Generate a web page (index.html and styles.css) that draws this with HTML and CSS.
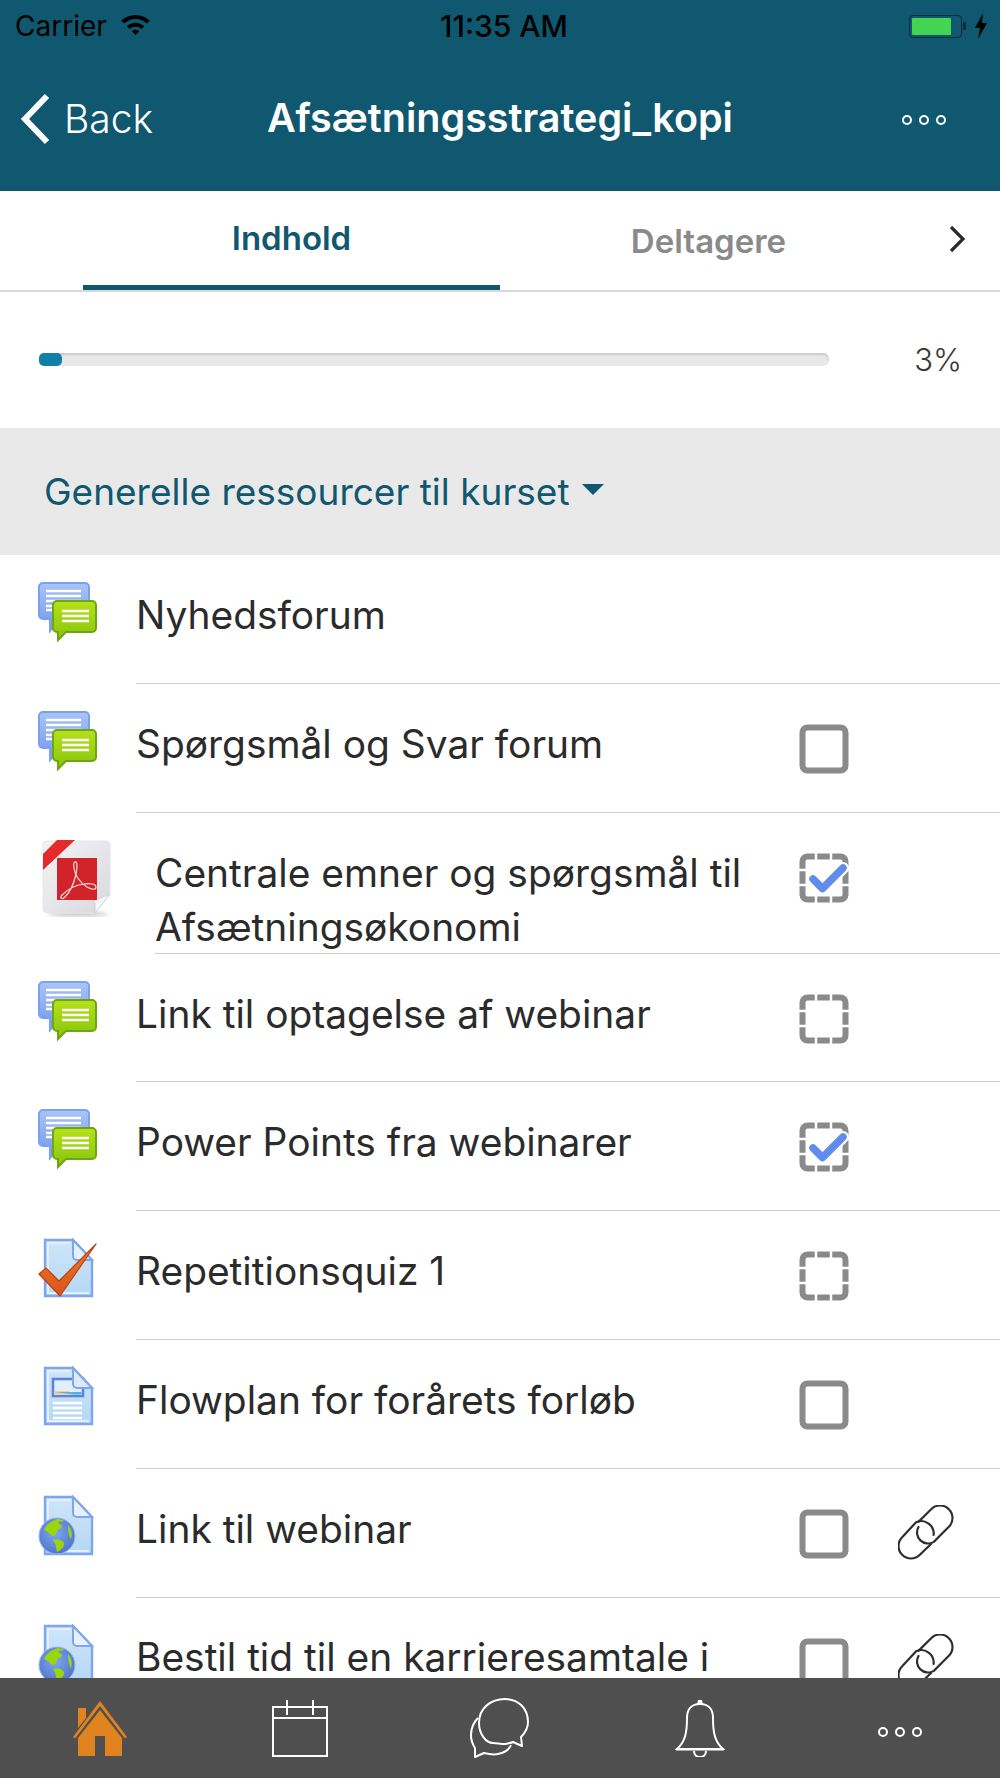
FILE: index.html
```html
<!DOCTYPE html>
<html lang="da">
<head>
<meta charset="utf-8">
<title>Afsætningsstrategi_kopi</title>
<link rel="stylesheet" href="styles.css">
</head>
<body>
<svg class="defs" width="0" height="0" aria-hidden="true">
  <defs>
    <linearGradient id="gBlue" x1="0" y1="0" x2="0" y2="1"><stop offset="0" stop-color="#a9c4f7"/><stop offset="1" stop-color="#6f97ec"/></linearGradient>
    <linearGradient id="gGreen" x1="0" y1="0" x2="0" y2="1"><stop offset="0" stop-color="#b5e21a"/><stop offset="1" stop-color="#86c40c"/></linearGradient>
    <linearGradient id="gDoc" x1="0" y1="0" x2="0" y2="1"><stop offset="0" stop-color="#cfe5f9"/><stop offset="1" stop-color="#b4d8f4"/></linearGradient>
    <linearGradient id="gPdf" x1="0" y1="0" x2="1" y2="1"><stop offset="0" stop-color="#f4f4f6"/><stop offset="1" stop-color="#d8d9de"/></linearGradient>
    <linearGradient id="gCheck" x1="0" y1="0" x2="0" y2="1"><stop offset="0" stop-color="#f07b2c"/><stop offset="1" stop-color="#d9541a"/></linearGradient>
    <radialGradient id="gGlobe" cx="0.45" cy="0.4" r="0.65"><stop offset="0" stop-color="#7ea6f0"/><stop offset="1" stop-color="#4c72c8"/></radialGradient>
    <filter id="soft"><feGaussianBlur stdDeviation="2"/></filter>

    <symbol id="i-forum" viewBox="0 0 80 80">
      <path d="M7 4h42a4 4 0 0 1 4 4v28a4 4 0 0 1-4 4H24L14 52V40H7a4 4 0 0 1-4-4V8a4 4 0 0 1 4-4z" fill="url(#gBlue)" stroke="#7c9fee" stroke-width="2"/>
      <path d="M10 12h35M10 17h35M10 22h35M10 27h24M10 31h12" stroke="#fff" stroke-width="2.4" fill="none"/>
      <path d="M21 22h35a4 4 0 0 1 4 4v23a4 4 0 0 1-4 4H30l-8 8v-8h-1a4 4 0 0 1-4-4V26a4 4 0 0 1 4-4z" fill="url(#gGreen)" stroke="#6fa512" stroke-width="2"/>
      <path d="M26 32h27M26 37h27M26 42h27" stroke="#fff" stroke-width="2.4" fill="none"/>
    </symbol>

    <symbol id="i-pdf" viewBox="0 0 80 80">
      <ellipse cx="42" cy="77" rx="30" ry="2" fill="#b9b9b9" filter="url(#soft)"/>
      <path d="M11 4h59a4 4 0 0 1 4 4v49L59 76H11a4 4 0 0 1-4-4V8a4 4 0 0 1 4-4z" fill="url(#gPdf)" stroke="#e6e6ea"/>
      <path d="M59 76V66a3 3 0 0 0-2-2l17-7z" fill="#f7f7f9" stroke="#cfd0d4"/>
      <path d="M21 3h18L7 33V17z" fill="#e32b2b"/>
      <rect x="21" y="21" width="40" height="42" fill="#d2232a"/>
      <path d="M26 58c-3 3 0 5 3 2 5-5 9-14 11-23 1-5 2-10 0-12-2-1-3 2-2 6 1 8 7 15 13 19 5 3 9 3 9 0s-6-4-12-3c-8 1-16 5-22 11z" fill="none" stroke="#f6dede" stroke-width="1.200"/>
    </symbol>

    <symbol id="i-quiz" viewBox="0 0 80 80">
      <path d="M9 5h28l19 20v36H9z" fill="url(#gDoc)" stroke="#7fa5ee" stroke-width="2.4"/>
      <path d="M12 8h23M12 8v50h41" fill="none" stroke="#e4f1fc" stroke-width="1.8"/>
      <path d="M37 5l19 20H41a4 4 0 0 1-4-4z" fill="#e5f0fb" stroke="#7fa5ee" stroke-width="2"/>
      <path d="M3 39l7-6 13 13L60 9 24 61z" fill="url(#gCheck)" stroke="#b8431a" stroke-width="1.2" stroke-linejoin="round"/>
    </symbol>

    <symbol id="i-page" viewBox="0 0 80 80">
      <path d="M9 4h28l19 20v36H9z" fill="url(#gDoc)" stroke="#7fa5ee" stroke-width="2.4"/>
      <path d="M12 7h23M12 7v50h41" fill="none" stroke="#e4f1fc" stroke-width="1.8"/>
      <rect x="17" y="15" width="30" height="17" fill="#dff1fb" stroke="#5f83dd" stroke-width="2.6"/>
      <path d="M18.500 31v-4h14l6 4z" fill="#f0d29a"/>
      <path d="M18.500 28h27v2.500h-8z" fill="#4fb4e8"/>
      <path d="M17 39h29M17 44h29M17 49h29M17 54h29" stroke="#fff" stroke-width="2.600" fill="none"/>
      <path d="M37 4l19 20H41a4 4 0 0 1-4-4z" fill="#dde9f8" stroke="#7fa5ee" stroke-width="2"/>
    </symbol>

    <symbol id="i-web" viewBox="0 0 80 80">
      <path d="M9 4h28l19 20v37H9z" fill="url(#gDoc)" stroke="#7fa5ee" stroke-width="2.4"/>
      <path d="M12 7h23M12 7v51h41" fill="none" stroke="#e4f1fc" stroke-width="1.8"/>
      <path d="M37 4l19 20H41a4 4 0 0 1-4-4z" fill="#e5f0fb" stroke="#7fa5ee" stroke-width="2"/>
      <circle cx="21" cy="43" r="18" fill="url(#gGlobe)" stroke="#9db8ef"/>
      <path d="M8 37c3-7 10-10 14-11 3 0 2 3 0 4 2 2 4 1 4 4-2 3-4 1-5 4-1 3-2 5-4 5-3-1-5-5-9-6z" fill="#9bd60c"/>
      <path d="M17 47c4-2 9 0 11 3 1 3-3 7-7 9-1-4-1-8-4-12z" fill="#9bd60c"/>
      <path d="M32 32c3 3 5 9 3 14-2-2-3-8-3-14zM22 27c2-1 5 0 6 1-2 1-5 1-6-1z" fill="#9bd60c"/>
    </symbol>

    <symbol id="i-box" viewBox="0 0 50 50">
      <rect x="3.500" y="3.500" width="43" height="43" rx="5" fill="none" stroke="#8a8a8a" stroke-width="6"/>
    </symbol>

    <symbol id="i-dash" viewBox="0 0 50 50">
      <rect x="3.500" y="3.500" width="43" height="43" rx="5" fill="none" stroke="#8a8a8a" stroke-width="6"/>
      <path d="M17 0v7M17 43v7M32 0v7M32 43v7M0 17h7M43 17h7M0 32h7M43 32h7" stroke="#fff" stroke-width="2.500"/>
    </symbol>

    <symbol id="i-dashcheck" viewBox="0 0 50 50">
      <rect x="3.500" y="3.500" width="43" height="43" rx="5" fill="none" stroke="#8a8a8a" stroke-width="6"/>
      <path d="M17 0v7M17 43v7M32 0v7M32 43v7M0 17h7M43 17h7M0 32h7M43 32h7" stroke="#fff" stroke-width="2.500"/>
      <path d="M14 26l9.500 9.500L44 15" fill="none" stroke="#fff" stroke-width="12" stroke-linecap="round" stroke-linejoin="round"/>
      <path d="M14 26l9.500 9.500L44 15" fill="none" stroke="#618cee" stroke-width="7.500" stroke-linecap="round" stroke-linejoin="round"/>
    </symbol>

    <symbol id="i-link" viewBox="0 0 56 56">
      <g fill="none" stroke="#2f2f2f" stroke-width="2.200" stroke-linecap="round">
        <path d="M20.700 16.600L33.160 4.160A12.500 12.500 0 0 1 50.840 21.840L35.840 36.840A11 11 0 0 1 20.500 22"/>
        <path d="M35.600 30A12.500 12.500 0 0 0 18.160 17.160L4.160 32.160A12.500 12.500 0 0 0 21.840 49.840L33 39"/>
      </g>
    </symbol>
  </defs>
</svg>

<div class="app">
  <header class="top">
    <div class="status">
      <div class="status-left">
        <span>Carrier</span>
        <svg class="wifi" viewBox="0 0 28 22" width="31" height="24"><path d="M1 8a18.500 18.500 0 0 1 26 0l-2.500 2.600a15 15 0 0 0-21 0z" fill="#000"/><path d="M6 13a11.500 11.500 0 0 1 16 0l-2.500 2.600a8 8 0 0 0-11 0z" fill="#000"/><path d="M10.500 17.500a5 5 0 0 1 7 0L14 21z" fill="#000"/></svg>
      </div>
      <div class="status-time">11:35 AM</div>
      <div class="status-right">
        <span class="battery"><span class="battery-level"></span></span>
        <span class="battery-nub"></span>
        <svg class="bolt" viewBox="0 0 14 26" width="14" height="26"><path d="M9 0L1 15h5l-2 11 9-16H8z" fill="#000"/></svg>
      </div>
    </div>
    <div class="nav">
      <div class="back">
        <svg class="back-icon" viewBox="0 0 32 52" width="32" height="52"><path d="M28 3L6 26l22 23" fill="none" stroke="#fff" stroke-width="6"/></svg>
        <span>Back</span>
      </div>
      <h1 class="title">Afsætningsstrategi_kopi</h1>
      <div class="dots dots-top"><i></i><i></i><i></i></div>
    </div>
  </header>

  <nav class="tabs">
    <div class="tab tab-active">Indhold</div>
    <div class="tab tab-next">Deltagere</div>
    <svg class="tab-chevron" viewBox="0 0 18 28" width="18" height="28"><path d="M3 2l12 12L3 26" fill="none" stroke="#2b2b2b" stroke-width="3.200"/></svg>
  </nav>

  <section class="progress">
    <div class="track"><div class="fill" style="width:23px"></div></div>
    <span class="percent">3%</span>
  </section>

  <div class="section-head">
    <span>Generelle ressourcer til kurset</span>
    <i class="caret"></i>
  </div>

  <main class="list">
    <div class="row">
      <svg class="mod"><use href="#i-forum"/></svg>
      <div class="row-body"><div class="row-text">Nyhedsforum</div></div>
    </div>
    <div class="row">
      <svg class="mod"><use href="#i-forum"/></svg>
      <div class="row-body"><div class="row-text">Spørgsmål og Svar forum</div><svg class="check"><use href="#i-box"/></svg><span class="slot"></span></div>
    </div>
    <div class="row row-tall">
      <svg class="mod"><use href="#i-pdf"/></svg>
      <div class="row-body row-inset"><div class="row-text">Centrale emner og spørgsmål til Afsætningsøkonomi</div><svg class="check"><use href="#i-dashcheck"/></svg><span class="slot"></span></div>
    </div>
    <div class="row">
      <svg class="mod"><use href="#i-forum"/></svg>
      <div class="row-body"><div class="row-text">Link til optagelse af webinar</div><svg class="check"><use href="#i-dash"/></svg><span class="slot"></span></div>
    </div>
    <div class="row">
      <svg class="mod"><use href="#i-forum"/></svg>
      <div class="row-body"><div class="row-text">Power Points fra webinarer</div><svg class="check"><use href="#i-dashcheck"/></svg><span class="slot"></span></div>
    </div>
    <div class="row">
      <svg class="mod"><use href="#i-quiz"/></svg>
      <div class="row-body"><div class="row-text">Repetitionsquiz 1</div><svg class="check"><use href="#i-dash"/></svg><span class="slot"></span></div>
    </div>
    <div class="row">
      <svg class="mod"><use href="#i-page"/></svg>
      <div class="row-body"><div class="row-text">Flowplan for forårets forløb</div><svg class="check"><use href="#i-box"/></svg><span class="slot"></span></div>
    </div>
    <div class="row">
      <svg class="mod"><use href="#i-web"/></svg>
      <div class="row-body"><div class="row-text">Link til webinar</div><svg class="check"><use href="#i-box"/></svg><span class="slot"><svg class="link"><use href="#i-link"/></svg></span></div>
    </div>
    <div class="row">
      <svg class="mod"><use href="#i-web"/></svg>
      <div class="row-body"><div class="row-text row-text-last">Bestil tid til en karrieresamtale i</div><svg class="check"><use href="#i-box"/></svg><span class="slot"><svg class="link"><use href="#i-link"/></svg></span></div>
    </div>
  </main>

  <footer class="bottom">
    <svg class="b-icon" viewBox="0 0 56 58" width="56" height="58"><path d="M28 2L1 38l2 1.500L28 7l25 32.500 2-1.500z" fill="#e0821d"/><path d="M6 9h8v10l-8 10z" fill="#e0821d"/><path d="M28 11L6 39v18h17V37h10v20h17V39z" fill="#e0821d"/></svg>
    <svg class="b-icon" viewBox="0 0 56 58" width="56" height="58"><g fill="none" stroke="#fff" stroke-width="2"><rect x="1" y="8" width="54" height="49"/><path d="M1 19h54" stroke-width="2"/><path d="M15 1v15M41 1v15"/></g></svg>
    <svg class="b-icon b-chat" viewBox="0 0 62 62" width="62" height="62"><g fill="none" stroke="#fff" stroke-width="2" stroke-linejoin="round"><path d="M36 2C22 2 10 11 10 26c0 11 7 20 14 20 3 0 8 1 12 1 4-1 6-1 8-2l9 4-1-9c4-4 7-9 7-15C59 11 49 2 36 2z" transform="translate(-1 0)"/><path d="M8 21C3 26 1 32 1 38c0 6 2 10 4 13v9l9-4c4 1 9 2 14 1 5-1 11-4 13-9"/></g></svg>
    <svg class="b-icon" viewBox="0 0 50 58" width="50" height="58"><g fill="none" stroke="#fff" stroke-width="2"><path d="M25 5c-10 0-13 7-13 14 0 15-2 24-10 31h46c-8-7-10-16-10-31 0-7-3-14-13-14z"/><path d="M1 50.500h48"/><path d="M19 52c0 8 12 8 12 0"/></g><path d="M22 6l1-5h4l1 5z" fill="#fff"/></svg>
    <div class="dots dots-bottom"><i></i><i></i><i></i></div>
  </footer>
</div>
</body>
</html>
```
FILE: styles.css
```css
* { box-sizing: border-box; }
html, body { margin: 0; padding: 0; background: #fff; }
body { font-family: Inter, "Liberation Sans", sans-serif; color: #2b2b2b; }
.defs { position: absolute; }

.app { width: 1000px; height: 1778px; display: flex; flex-direction: column; overflow: hidden; }

.top { background: #0f586f; height: 191px; flex: none; }
.status { height: 52px; padding: 0 12px 0 15px; display: flex; align-items: center; justify-content: space-between; position: relative; color: #000; font-size: 28px; }
.status-left { display: flex; align-items: center; gap: 13px; }
.status-left .wifi { margin-bottom: 5px; }
.status-time { font-size: 30px; font-weight: 500; position: absolute; left: 8px; right: 0; text-align: center; }
.status-right { display: flex; align-items: center; }
.battery { width: 53px; height: 23px; border: 1.500px solid #0a2d38; border-radius: 4px; padding: 2px; margin-right: 1px; display: block; }
.battery-level { display: block; width: 39px; height: 100%; background: #43d551; border-radius: 1px; }
.battery-nub { width: 3px; height: 8px; background: #0a2d38; border-radius: 0 2px 2px 0; margin-right: 8px; }

.nav { height: 139px; display: flex; align-items: center; position: relative; padding: 0 0 6px 0; }
.back { display: flex; align-items: center; color: #fff; font-size: 39px; font-weight: 300; padding-left: 19px; gap: 13px; }
.title { position: absolute; left: 267px; top: 44px; margin: 0; color: #fff; font-size: 39.500px; line-height: 44px; font-weight: 600; white-space: nowrap; }
.dots { display: flex; gap: 7px; }
.dots i { display: block; width: 10px; height: 10px; border: 2px solid #fff; border-radius: 50%; }
.dots-top { margin-left: auto; margin-right: 54px; margin-top: 2px; }

.tabs { height: 101px; flex: none; position: relative; display: flex; border-bottom: 2px solid #d8d8d8; }
.tab { font-size: 33px; font-weight: 600; position: relative; }
.tab-active { color: #0f586f; width: 417px; margin-left: 83px; height: 99px; padding-top: 27px; text-align: center; border-bottom: 5px solid #0f586f; }
.tab-next { color: #8a8a8a; width: 417px; padding-top: 30px; text-align: center; }
.tab-chevron { position: absolute; left: 948px; top: 34px; }

.progress { height: 136px; flex: none; display: flex; align-items: center; padding: 0 38px 0 39px; }
.track { width: 790px; height: 13px; background: #e8e8e8; border-radius: 6px; box-shadow: inset 0 2px 2px rgba(0,0,0,.13); margin-top: -2px; }
.fill { height: 100%; background: #1180a8; border-radius: 5px; }
.percent { margin-left: auto; font-size: 31px; font-weight: 300; color: #3a3a3a; margin-top: -1px; }

.section-head { height: 127px; flex: none; background: #e9e9e9; display: flex; align-items: center; padding-left: 44px; gap: 12px; color: #0f586f; font-size: 37px; }
.caret { width: 0; height: 0; border-left: 11px solid transparent; border-right: 11px solid transparent; border-top: 11px solid #0f586f; margin-top: -4px; }

.list { flex: 1; min-height: 0; overflow: hidden; }
.row { height: 128.800px; display: flex; }
.row-tall { height: 141px; }
.mod { width: 80px; height: 80px; margin: 24px 20px 0 36px; flex: none; }
.row-body { flex: 1; min-width: 0; display: flex; align-items: flex-start; border-bottom: 1px solid #cfcfcf; padding-top: 33px; }
.row-inset { margin-left: 19px; }
.row-text { flex: 1; min-width: 0; font-size: 38.900px; line-height: 54px; color: #2b2b2b; padding-right: 10px; }
.row-text-last { line-height: 36px; padding-top: 8px; }
.check { width: 50px; height: 50px; flex: none; margin-top: 7px; }
.slot { width: 151px; flex: none; padding-left: 49px; display: block; }
.link { width: 56px; height: 56px; display: block; margin-top: 3px; }

.bottom { height: 100px; flex: none; background: #4f4f4f; display: grid; grid-template-columns: repeat(5, 200px); align-items: center; justify-items: center; }
.b-icon { display: block; }
.b-chat { margin-left: 2px; }
.dots-bottom { margin-top: 8px; }
```
